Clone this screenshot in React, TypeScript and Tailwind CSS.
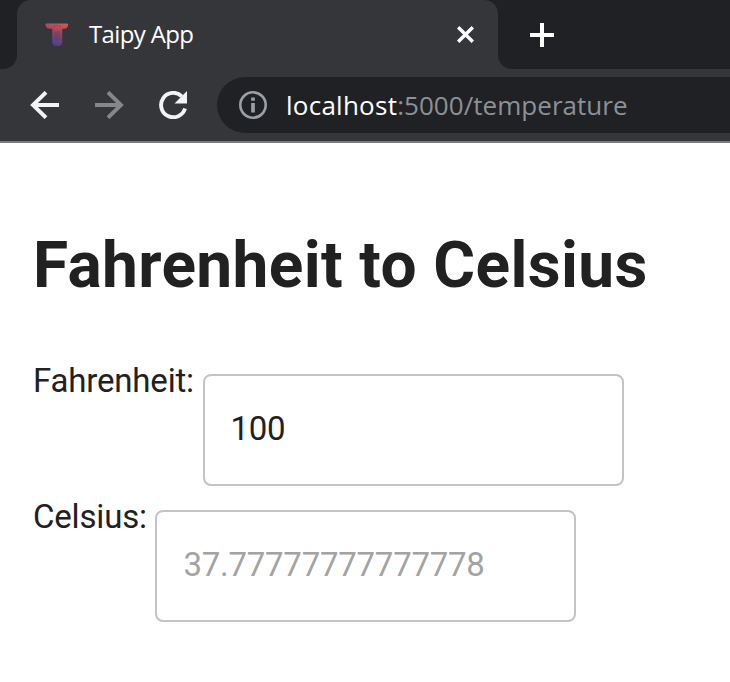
import type { ReactNode } from "react";

function TabStrip() {
  return (
    <div className="flex h-[69px] bg-[#202124]">
      <div className="flex w-[17px] bg-[#35363a]">
        <div className="w-full rounded-br-[14px] bg-[#202124]" />
      </div>
      <div className="bg-[#202124]">
        <div className="flex h-full w-[481px] items-center rounded-t-[14px] bg-[#35363a] pl-[28px] pr-[24px]">
          <svg width="24" height="24" viewBox="0 0 24 24" className="shrink-0">
            <defs>
              <linearGradient id="logo" x1="0.7" y1="0" x2="0.4" y2="1">
                <stop offset="0" stopColor="#d9534e" />
                <stop offset="0.45" stopColor="#8d4568" />
                <stop offset="1" stopColor="#3d449a" />
              </linearGradient>
            </defs>
            <path d="M1.500 0.500h20.500q1.600 0 1 2q-.8 3.300-4 3.300h-1.800v12.700q0 4.500-5 4.500t-5-4.500V5.800H5Q1.500 5.800.600 2.500Q0 .500 1.500.500z" fill="url(#logo)" />
            <path d="M8 4l4-2 4 2M12 8v10M10 9v8M14 7v10" fill="none" stroke="#35363a" strokeOpacity=".3" />
          </svg>
          <span className="-mt-[2px] ml-[20px] whitespace-nowrap font-['Open_Sans',sans-serif] text-[24px] leading-[32px] tracking-[-0.65px] text-white">Taipy App</span>
          <svg width="17" height="17" viewBox="0 0 17 17" className="ml-auto shrink-0">
            <path d="M1.200 1.200l14.600 14.600M15.800 1.200L1.200 15.800" stroke="#fff" strokeWidth="3.400" />
          </svg>
        </div>
      </div>
      <div className="flex flex-1 bg-[#35363a]">
        <div className="flex flex-1 items-center rounded-bl-[14px] bg-[#202124] pl-[32px]">
          <svg width="24" height="24" viewBox="0 0 24 24">
            <path d="M12 0v24M0 12h24" stroke="#fff" strokeWidth="4" />
          </svg>
        </div>
      </div>
    </div>
  );
}

function Toolbar() {
  return (
    <div className="flex h-[74px] items-start border-b-2 border-[#7b7b7b] bg-[#35363a] pl-[30px] pt-[8px]">
      <div className="flex h-[56px] items-center">
        <svg width="29" height="28" viewBox="0 0 29 28" fill="none" stroke="#f1f3f4" strokeWidth="3.900">
          <path d="M29 14H4M16 1.300L3 14l13 12.700" />
        </svg>
        <svg width="29" height="28" viewBox="0 0 29 28" fill="none" stroke="#86878a" strokeWidth="3.900" className="ml-[36px]">
          <path d="M0 14h25M13 1.300L26 14 13 26.700" />
        </svg>
        <svg width="29" height="28" viewBox="0 0 29 28" className="ml-[35px]">
          <path d="M26 17.500A12.200 12.200 0 1 1 22.800 5.300" fill="none" stroke="#f1f3f4" strokeWidth="3.900" />
          <path d="M28 0v12.500H15.500z" fill="#f1f3f4" />
        </svg>
      </div>
      <div className="ml-[29px] flex h-[56px] flex-1 items-center rounded-l-full bg-[#202124] pl-[22px]">
        <svg width="28" height="28" viewBox="0 0 28 28" className="shrink-0">
          <circle cx="14" cy="14" r="12.700" fill="none" stroke="#9aa0a6" strokeWidth="2.600" />
          <path d="M14 6.500v3.300M14 12v9.500" stroke="#9aa0a6" strokeWidth="3.700" />
        </svg>
        <span className="ml-[19px] whitespace-nowrap font-['Open_Sans',sans-serif] text-[26px] leading-[36px] text-[#8d9196]">
          <span className="font-medium tracking-[0.25px] text-white">localhost</span>
          <span className="tracking-[0.04px]">:5000/temperature</span>
        </span>
      </div>
    </div>
  );
}

function Field({ label, children }: { label: string; children: ReactNode }) {
  return (
    <div className="flex h-[112px] items-start">
      <span className="-mt-[13px] mr-[8.6px] whitespace-nowrap text-[33px] leading-[40px] tracking-[-0.18px]">{label}</span>
      <div className="flex h-[112px] w-[421px] items-center rounded-[8px] border-2 border-[#c4c4c4] pb-[2px] pl-[26px] text-[33px] leading-[40px] tracking-[-0.25px]">
        {children}
      </div>
    </div>
  );
}

export default function App() {
  return (
    <div className="h-[682px] w-[730px] overflow-hidden bg-white">
      <TabStrip />
      <Toolbar />
      <main className="flex flex-col pl-[33px] pt-[85px] font-[Roboto,sans-serif] text-[#212121]">
        <h1 className="whitespace-nowrap text-[64px] font-bold leading-[76px] tracking-[0.36px]">Fahrenheit to Celsius</h1>
        <div className="mt-[70px] flex flex-col gap-[24px]">
          <Field label="Fahrenheit:">
            <span>100</span>
          </Field>
          <Field label="Celsius:">
            <span className="text-[#a3a3a3]">37.77777777777778</span>
          </Field>
        </div>
      </main>
    </div>
  );
}
